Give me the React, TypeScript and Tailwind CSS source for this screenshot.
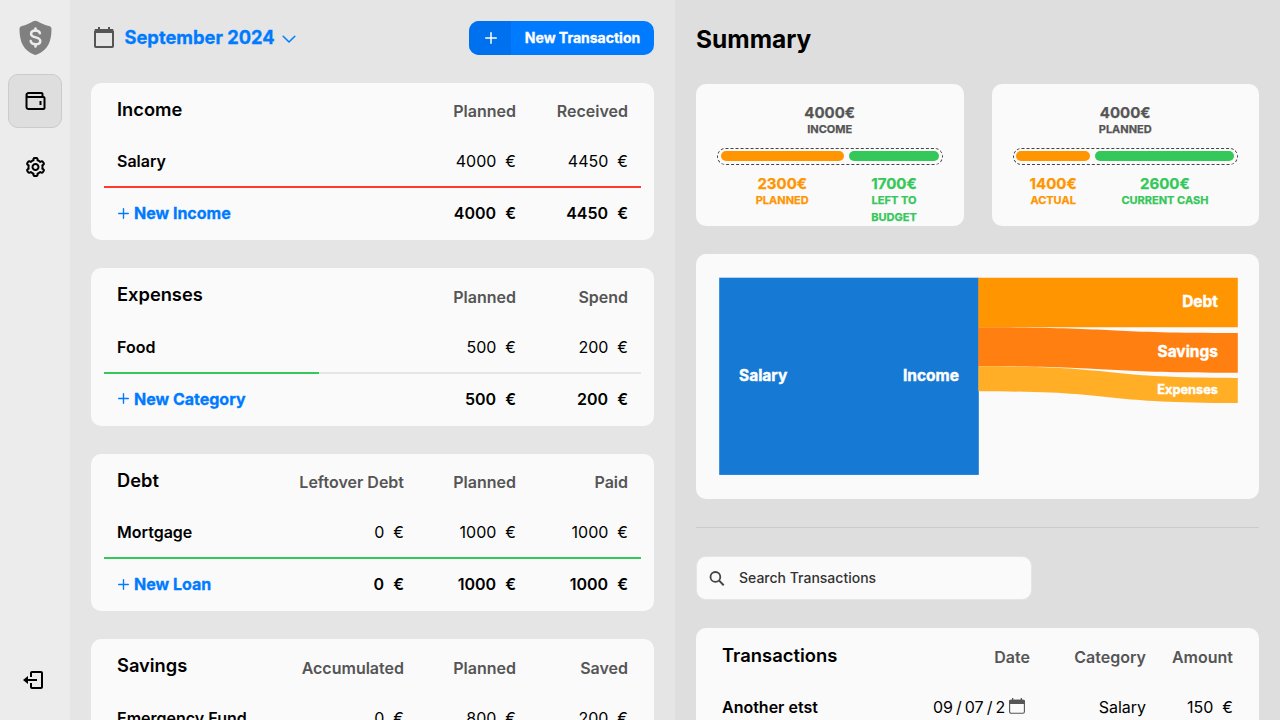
import type { ReactNode } from "react";
import { BiWallet, BiCog, BiLogOut } from "react-icons/bi";

const Plus = ({ size, className = "" }: { size: number; className?: string }) => (
  <svg width={size} height={size} viewBox="0 0 12 12" fill="none" stroke="currentColor" strokeWidth="1.5" strokeLinecap="round" className={className}>
    <path d="M6 .75v10.5M.75 6h10.5" />
  </svg>
);

const Shield = () => (
  <svg width="34" height="36" viewBox="0.5 0 34 36" className="shrink-0">
    <path d="M14.8 1.2c1.3-.7 2.7-.7 4 0C22.5 3.2 26.400 5 30.500 6.100c1.600.4 2.500 1.400 2.500 3C33 22 29 30.500 18.500 34.600c-1.100.4-2.100.4-3.200 0C5 30.500 1 22 1 9.100c0-1.600.9-2.600 2.500-3C7.500 5 11.200 3.200 14.800 1.200Z" fill="#808080" />
    <g fill="none" stroke="#ececec" strokeLinecap="round">
      <path d="M21.400 13.300c-.4-1.700-2-2.700-4.400-2.700-2.600 0-4.400 1.300-4.400 3.300 0 4.600 9.200 2.300 9.200 7 0 2.100-1.900 3.400-4.700 3.400-2.700 0-4.500-1.200-4.900-3.200" strokeWidth="2.500" />
      <path d="M17 8.600v1.800M17 24.600v1.900" strokeWidth="2.600" />
    </g>
  </svg>
);

const Calendar = ({ thin = false }: { thin?: boolean }) =>
  thin ? (
    <svg width="16" height="16" viewBox="0 0 16 16" fill="none" className="-mt-[2px] shrink-0">
      <rect x=".6" y="2.300" width="14.800" height="13" rx="1.500" stroke="#555" strokeWidth="1.100" />
      <path d="M0 6V3.300C0 2.300.7 1.700 1.700 1.700H3V0h1.300v1.700h7.400V0H13v1.700h1.300c1 0 1.700.6 1.700 1.600V6Z" fill="#555" />
    </svg>
  ) : (
    <svg width="20" height="22" viewBox="0 0 20 22" fill="none" className="shrink-0">
      <path d="M1 4v15.200c0 .5.3.8.8.8h16.400c.5 0 .8-.3.8-.8V4" stroke="#555" strokeWidth="2" />
      <path d="M.5 6V3.200C.5 2.500 1 2 1.700 2H4V0h2v2h8V0h2v2h2.300c.7 0 1.200.5 1.200 1.200V6Z" fill="#555" />
    </svg>
  );

type Section = {
  title: string;
  heads: string[];
  row: string;
  values: string[];
  add: string;
  totals: string[];
  bar: string;
  progress: number;
};

const sections: Section[] = [
  { title: "Income", heads: ["Planned", "Received"], row: "Salary", values: ["4000", "4450"], add: "New Income", totals: ["4000", "4450"], bar: "bg-[#ff3b30]", progress: 100 },
  { title: "Expenses", heads: ["Planned", "Spend"], row: "Food", values: ["500", "200"], add: "New Category", totals: ["500", "200"], bar: "bg-[#34c759]", progress: 40 },
  { title: "Debt", heads: ["Leftover Debt", "Planned", "Paid"], row: "Mortgage", values: ["0", "1000", "1000"], add: "New Loan", totals: ["0", "1000", "1000"], bar: "bg-[#34c759]", progress: 100 },
  { title: "Savings", heads: ["Accumulated", "Planned", "Saved"], row: "Emergency Fund", values: ["0", "800", "200"], add: "New Fund", totals: ["0", "800", "200"], bar: "bg-[#34c759]", progress: 25 },
];

const Money = ({ value }: { value: string }) => (
  <span className="flex w-28 justify-end gap-[9px]">
    <span>{value}</span>
    <span>€</span>
  </span>
);

const BudgetCard = ({ s }: { s: Section }) => (
  <section className="h-[157.200px] shrink-0 rounded-[10px] bg-[#fafafa] px-[13px]">
    <div className="flex h-[53.300px] px-[13px]">
      <h2 className="flex-1 pt-[12.800px] text-[18.300px] leading-[27px] font-semibold">{s.title}</h2>
      {s.heads.map((h) => (
        <span key={h} className="w-28 pt-[16.350px] text-right leading-6 font-semibold whitespace-nowrap text-[#555]">{h}</span>
      ))}
    </div>
    <div className="flex h-[50px] items-center px-[13px] leading-6">
      <span className="flex-1 font-semibold">{s.row}</span>
      {s.values.map((v, i) => <Money key={i} value={v} />)}
    </div>
    <div className="h-0.5 bg-[#e5e5e5]">
      <div className={`h-full ${s.bar}`} style={{ width: `${s.progress}%` }} />
    </div>
    <div className="flex h-[50px] items-center px-[13px] leading-6 font-semibold">
      <span className="flex flex-1 items-center font-bold text-[#007aff] [-webkit-text-stroke:0.3px]">
        <Plus size={11} className="mr-[5px] ml-px" />
        {s.add}
      </span>
      {s.totals.map((v, i) => <Money key={i} value={v} />)}
    </div>
  </section>
);

const Stat = ({ value, label, className = "" }: { value: string; label: ReactNode; className?: string }) => (
  <div className={`flex flex-col items-center text-center font-bold [-webkit-text-stroke:0.25px] ${className}`}>
    <span className="text-[15px] leading-4">{value}</span>
    <span className="text-[11px] leading-[17px]">{label}</span>
  </div>
);

const SummaryCard = ({ total, label, left, leftLabel, right, rightLabel, share }: { total: string; label: string; left: string; leftLabel: string; right: string; rightLabel: ReactNode; share: number }) => (
  <div className="h-[142px] flex-1 rounded-[10px] bg-[#fafafa] px-[21px] pt-[21px]">
    <Stat value={total} label={label} className="text-[#555]" />
    <div className="mt-[10px] flex h-[17px] gap-[5px] rounded-full border border-dashed border-[#444] py-[2px] pr-[3px] pl-[2.500px]">
      <div className="h-[10px] rounded-full bg-[#ff9500]" style={{ width: `${share}%` }} />
      <div className="h-[10px] flex-1 rounded-full bg-[#34c759]" />
    </div>
    <div className="mt-[11px] flex gap-[5px] px-[3.500px]">
      <div style={{ width: `${share}%` }}><Stat value={left} label={leftLabel} className="text-[#ff9500]" /></div>
      <div className="flex-1"><Stat value={right} label={rightLabel} className="text-[#34c759]" /></div>
    </div>
  </div>
);

const Sankey = () => (
  <svg width="519" height="198" viewBox="0 0 519 198" className="font-[Inter,sans-serif] font-bold">
    <rect x=".2" y=".7" width="259.600" height="197.200" fill="#1679d4" />
    <path d="M259.300.7H518.800V50.300H259.300Z" fill="#ff9500" />
    <path d="M259.300 50.300C407 50.300 371 55.900 518.800 55.900V95.700C371 95.700 407 89.300 259.300 89.300Z" fill="#ff7f11" />
    <path d="M259.300 89.300C407 89.300 371 100.900 518.800 100.900V126.100C371 126.100 407 114.300 259.300 114.300Z" fill="#ffae25" />
    <g fill="#fff" fontSize="15.500" stroke="#fff" strokeWidth=".4">
      <text x="20" y="103.500">Salary</text>
      <text x="240" y="103.500" textAnchor="end">Income</text>
      <text x="499" y="29.500" textAnchor="end">Debt</text>
      <text x="499" y="79.500" textAnchor="end">Savings</text>
      <text x="499" y="117" textAnchor="end" fontSize="12.800">Expenses</text>
    </g>
  </svg>
);

export default function App() {
  return (
    <div className="flex h-[720px] w-[1280px] overflow-hidden bg-[#dedede] font-[Inter,sans-serif] text-base text-black">
      <nav className="flex w-[70px] shrink-0 flex-col items-center bg-[#ececec] pt-5 pb-7">
        <div className="flex h-9 w-full justify-center pl-px"><Shield /></div>
        <div className="mt-[18px] flex h-[54px] w-[54px] items-center justify-center rounded-[10px] border border-[#cbcbcb] bg-[#dedede]">
          <BiWallet size={24} className="translate-x-[0.5px]" />
        </div>
        <BiCog size={24} className="mt-[27px] translate-x-[0.5px]" />
        <BiLogOut size={24} className="mt-auto mr-1" />
      </nav>
      <main className="flex w-[605px] shrink-0 flex-col overflow-hidden bg-[#e5e5e5] px-[21px]">
        <header className="flex h-[83px] shrink-0 items-start justify-between pt-[21px]">
          <div className="flex h-[34px] items-center pl-[2.500px]">
            <Calendar />
            <span className="mb-0.5 ml-[11px] text-[18.300px] leading-7 font-bold text-[#007aff] [-webkit-text-stroke:0.3px]">September 2024</span>
            <svg width="14" height="8" viewBox="0 0 14 8" fill="none" stroke="#007aff" strokeWidth="1.500" strokeLinecap="round" strokeLinejoin="round" className="mt-0.5 ml-[7px]">
              <path d="m1.200 1.200 5.800 5.800 5.800-5.800" />
            </svg>
          </div>
          <button className="flex h-[34px] w-[185px] overflow-hidden rounded-[10px] bg-[#007aff] text-white">
            <span className="flex h-full w-[42px] items-center justify-center bg-[#0071ee] pl-px"><Plus size={12} /></span>
            <span className="flex h-full flex-1 items-center justify-center text-sm font-bold [-webkit-text-stroke:0.3px]">New Transaction</span>
          </button>
        </header>
        <div className="flex flex-col gap-[28.280px]">
          {sections.map((s) => <BudgetCard key={s.title} s={s} />)}
        </div>
      </main>
      <aside className="flex w-[605px] flex-col px-[21px]">
        <h1 className="h-[84px] shrink-0 pt-[21px] text-[24.500px] leading-9 font-bold">Summary</h1>
        <div className="flex shrink-0 gap-7">
          <SummaryCard total="4000€" label="INCOME" left="2300€" leftLabel="PLANNED" right="1700€" rightLabel={<>LEFT TO<br />BUDGET</>} share={56.500} />
          <SummaryCard total="4000€" label="PLANNED" left="1400€" leftLabel="ACTUAL" right="2600€" rightLabel="CURRENT CASH" share={34} />
        </div>
        <div className="mt-7 h-[245px] shrink-0 rounded-[10px] bg-[#fafafa] pt-[23px] pl-[23px]"><Sankey /></div>
        <hr className="mt-7 shrink-0 border-[#cbcbcb]" />
        <div className="mt-7 flex h-11 w-[336px] shrink-0 items-center rounded-[10px] border border-[#e5e5e5] bg-[#fafafa] pl-3">
          <svg width="16" height="15" viewBox="-.5 0 16 15" fill="none" stroke="#444" strokeWidth="1.800">
            <circle cx="5.900" cy="5.900" r="4.900" />
            <path d="m9.400 9.400 4.800 4.800" strokeWidth="2" />
          </svg>
          <span className="ml-[14px] text-sm font-medium text-[#333]">Search Transactions</span>
        </div>
        <section className="mt-7 h-[200px] shrink-0 rounded-[10px] bg-[#fafafa] px-[26px]">
          <div className="flex h-[54px]">
            <h2 className="flex-1 pt-[14px] text-[18.400px] leading-[27px] font-semibold">Transactions</h2>
            <span className="pt-[17px] leading-6 font-semibold text-[#555]">Date</span>
            <span className="w-[116px] pt-[17px] text-right leading-6 font-semibold text-[#555]">Category</span>
            <span className="w-[87px] pt-[17px] text-right leading-6 font-semibold text-[#555]">Amount</span>
          </div>
          <div className="flex h-[50px] items-center leading-6">
            <span className="flex-1 font-semibold">Another etst</span>
            <span className="flex w-[97px] items-center">
              <span className="flex w-[76px] gap-[3px] overflow-hidden whitespace-nowrap">
                <span>09</span><span>/</span><span>07</span><span>/</span><span>2</span>
              </span>
              <Calendar thin />
            </span>
            <span className="w-[116px] text-right">Salary</span>
            <span className="flex w-[87px] justify-end gap-[9px]"><span>150</span><span>€</span></span>
          </div>
        </section>
      </aside>
    </div>
  );
}
